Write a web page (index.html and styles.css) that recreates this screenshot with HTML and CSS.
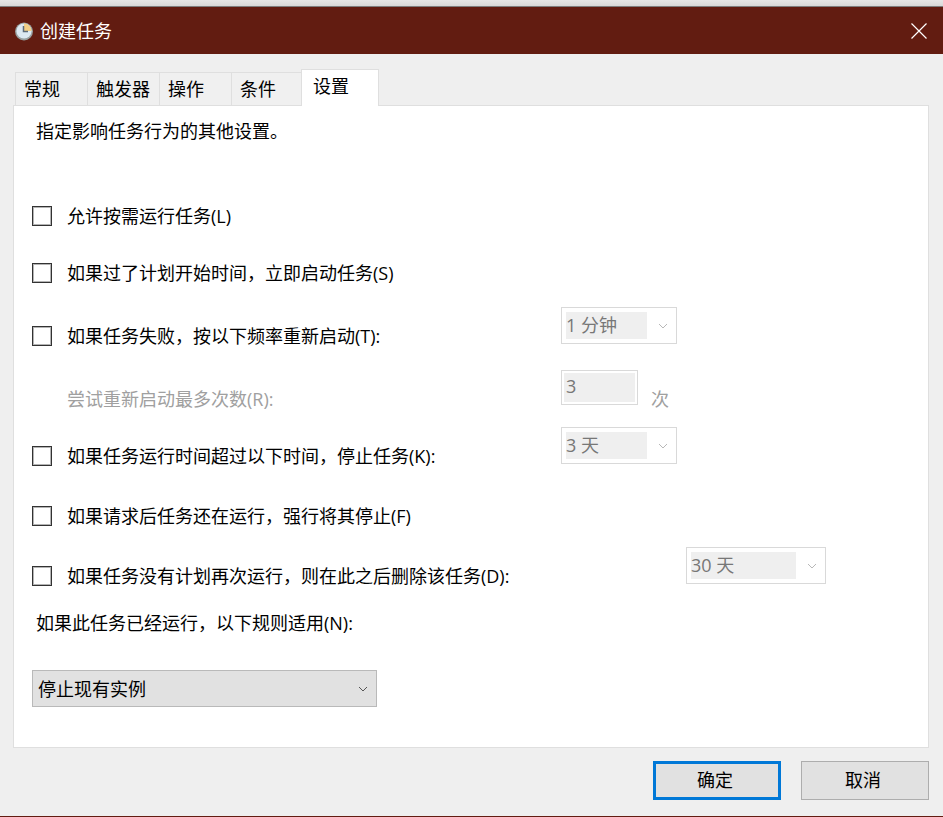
FILE: index.html
```
<!DOCTYPE html>
<html lang="zh-CN">
<head>
  <meta charset="UTF-8" />
  <meta name="viewport" content="width=device-width, initial-scale=1.0"/>
  <title>创建任务</title>
  <link rel="stylesheet" href="styles.css">
</head>
<body>
  <div class="desktop-edge"></div>

  <div class="window">
    <header class="title-bar">
      <svg class="app-icon" viewBox="0 0 20 20" width="20" height="20">
        <circle cx="10" cy="10.5" r="9" fill="#98a0a0"/>
        <circle cx="10" cy="10" r="7.6" fill="#dce9f2"/>
        <path d="M10 10V2.4A7.6 7.6 0 0 1 17.6 10z" fill="#f2cf86"/>
        <path d="M9.5 5V10.5H14" fill="none" stroke="#5c6c7a" stroke-width="1.5"/>
      </svg>
      <h1>创建任务</h1>
      <button class="close-btn" aria-label="关闭">
        <svg viewBox="0 0 16 16" width="16" height="16">
          <path d="M0.5 0.5L15.5 15.5M15.5 0.5L0.5 15.5" fill="none" stroke="#fff" stroke-width="1.2"/>
        </svg>
      </button>
    </header>

    <main class="content">
      <div class="tabs" role="tablist">
        <button class="tab" role="tab">常规</button>
        <button class="tab" role="tab">触发器</button>
        <button class="tab" role="tab">操作</button>
        <button class="tab" role="tab">条件</button>
        <button class="tab active" role="tab" aria-selected="true">设置</button>
      </div>

      <section class="panel" role="tabpanel">
        <p class="intro">指定影响任务行为的其他设置。</p>

        <div class="row short">
          <label class="check"><input type="checkbox"><span>允许按需运行任务(L)</span></label>
        </div>

        <div class="row tall">
          <label class="check"><input type="checkbox"><span>如果过了计划开始时间，立即启动任务(S)</span></label>
        </div>

        <div class="row tall">
          <label class="check"><input type="checkbox"><span>如果任务失败，按以下频率重新启动(T):</span></label>
          <div class="combo">
            <select aria-label="重新启动频率" disabled><option>1 分钟</option></select>
            <svg class="chevron" viewBox="0 0 10 6" width="10" height="6"><path d="M1 1L5 5L9 1"/></svg>
          </div>
        </div>

        <div class="row short">
          <label class="check disabled" for="retries">尝试重新启动最多次数(R):</label>
          <input class="count" id="retries" type="text" value="3" disabled>
          <span class="unit">次</span>
        </div>

        <div class="row">
          <label class="check"><input type="checkbox"><span>如果任务运行时间超过以下时间，停止任务(K):</span></label>
          <div class="combo">
            <select aria-label="停止任务时间" disabled><option>3 天</option></select>
            <svg class="chevron" viewBox="0 0 10 6" width="10" height="6"><path d="M1 1L5 5L9 1"/></svg>
          </div>
        </div>

        <div class="row">
          <label class="check"><input type="checkbox"><span>如果请求后任务还在运行，强行将其停止(F)</span></label>
        </div>

        <div class="row">
          <label class="check wide"><input type="checkbox"><span>如果任务没有计划再次运行，则在此之后删除该任务(D):</span></label>
          <div class="combo wide">
            <select aria-label="删除任务时间" disabled><option>30 天</option></select>
            <svg class="chevron" viewBox="0 0 10 6" width="10" height="6"><path d="M1 1L5 5L9 1"/></svg>
          </div>
        </div>

        <label class="rule-label" for="rule">如果此任务已经运行，以下规则适用(N):</label>
        <div class="combo rule">
          <select id="rule"><option>停止现有实例</option></select>
          <svg class="chevron" viewBox="0 0 10 6" width="10" height="6"><path d="M1 1L5 5L9 1"/></svg>
        </div>
      </section>

      <footer class="actions">
        <button class="btn primary">确定</button>
        <button class="btn">取消</button>
      </footer>
    </main>
  </div>
</body>
</html>
```

FILE: styles.css
```
* {
  box-sizing: border-box;
}

body {
  margin: 0;
  min-height: 100vh;
  display: flex;
  flex-direction: column;
  background: #efefef;
  color: #000;
  font-family: "Open Sans", "Noto Sans CJK SC", sans-serif;
  font-size: 18px;
  line-height: 26px;
}

button, input, select {
  font: inherit;
  color: inherit;
  margin: 0;
  border-radius: 0;
}

.desktop-edge {
  height: 7px;
  background: linear-gradient(#e6e6e6, #d8d8d8);
  border-bottom: 1px solid #7d7d7d;
}

.window {
  flex: 1;
  display: flex;
  flex-direction: column;
  border-bottom: 1px solid #621c11;
}

/* title bar */
.title-bar {
  display: flex;
  align-items: center;
  height: 47px;
  padding: 0 8px 0 14px;
  background: #621c11;
  color: #fff;
}

.title-bar h1 {
  flex: 1;
  margin: 0 0 0 6px;
  font-size: 18px;
  font-weight: 400;
}

.close-btn {
  display: flex;
  padding: 8px;
  border: none;
  background: none;
}

/* tabs */
.content {
  padding: 15px 14px 16px 13px;
}

.tabs {
  display: flex;
  align-items: flex-end;
  padding-left: 2px;
}

.tab {
  width: 72px;
  height: 33px;
  padding: 0 0 0 8px;
  border: 1px solid #dfdfdf;
  border-width: 1px 0 0 1px;
  background: #f0f0f0;
  text-align: left;
  white-space: nowrap;
}

.tab.active {
  width: 78px;
  height: 37px;
  margin: 0 0 -1px -2px;
  padding: 0 0 4px 11px;
  border-right-width: 1px;
  background: #fff;
  z-index: 1;
}

.panel {
  padding: 12px 18px 40px;
  border: 1px solid #dfdfdf;
  background: #fff;
}

.intro {
  margin: 0 0 43px 4px;
}

/* setting rows */
.row {
  display: flex;
  align-items: flex-start;
  height: 60px;
}

.row.short { height: 57px; }
.row.tall { height: 63px; }

.check {
  display: flex;
  align-items: center;
  gap: 15px;
  width: 529px;
  padding-top: 16px;
}

.check.wide { width: 654px; }

.check.disabled {
  padding-left: 35px;
  color: #a0a0a0;
}

.check input {
  appearance: none;
  width: 20px;
  height: 20px;
  border: 1px solid #333;
  background: #fff;
  box-shadow: inset 0 0 0 1px #b4b4b4;
}

.check input:checked {
  background: #444;
}

.unit {
  padding: 16px 0 0 13px;
  color: #a0a0a0;
}

.combo {
  position: relative;
  width: 116px;
  height: 37px;
  padding: 4px 29px 4px 4px;
  border: 1px solid #d9d9d9;
}

.combo.wide { width: 140px; }

.combo select {
  display: block;
  appearance: none;
  width: 100%;
  height: 100%;
  padding: 0;
  border: none;
  background: #efefef;
  line-height: 24px;
}

.combo select:disabled, .count:disabled {
  color: #777;
  opacity: 1;
}

.combo select:disabled {
  padding-bottom: 2px;
}

.chevron {
  position: absolute;
  right: 8px;
  top: 15px;
  fill: none;
  stroke: #b8b8b8;
  pointer-events: none;
}

.count {
  width: 77px;
  height: 35px;
  padding: 2px 3px 5px 4px;
  border: 1px solid #d9d9d9;
  background: #efefef;
  box-shadow: inset 0 0 0 2px #fff;
}

.rule-label {
  display: block;
  padding: 3px 0 0 4px;
  margin-bottom: 34px;
}

.combo.rule {
  width: 345px;
  padding: 0;
  border-color: #b9b9b9;
}

.combo.rule select {
  padding-left: 5px;
  background: #e1e1e1;
}

.combo.rule .chevron { stroke: #555; }

/* bottom buttons */
.actions {
  display: flex;
  justify-content: flex-end;
  gap: 20px;
  margin-top: 13px;
}

.btn {
  width: 128px;
  height: 39px;
  padding: 0 4px 2px 0;
  border: 1px solid #adadad;
  background: #e1e1e1;
}

.btn.primary {
  border: 3px solid #0078d7;
}
```
